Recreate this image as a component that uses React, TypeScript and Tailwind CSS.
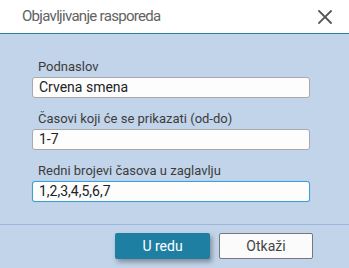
import React from "react";

export default function App() {
  const font = { fontFamily: "Roboto, 'Liberation Sans', Arial, sans-serif" };
  return (
    <div className="w-[349px] h-[268px] flex flex-col bg-[#c2d4ea] overflow-hidden" style={font}>
      <div className="h-[34px] shrink-0 bg-white border-b border-[#2d7fa6] flex items-center justify-between pl-[22px] pr-[17px]">
        <span className="text-[15px] tracking-[-0.7px] text-[#626262] leading-none">Objavljivanje rasporeda</span>
        <svg width="14" height="14" viewBox="0 0 14 14" className="block">
          <path d="M1 1L13 13M13 1L1 13" stroke="#555" strokeWidth="1.8" strokeLinecap="square" />
        </svg>
      </div>
      <div className="h-[190px] shrink-0 pt-[25px] pl-[32px] pr-[39px] flex flex-col gap-[13px]">
        <div className="flex flex-col gap-[2px]">
          <label className="text-[13px] leading-[16px] text-[#3c3c3c] pl-[6px]">Podnaslov</label>
          <div className="h-[21px] bg-[#fdfdfd] border border-[#a9a9a9] rounded-[3px] flex items-center pl-[6px] text-[14px] text-[#222]">
            Crvena smena
          </div>
        </div>
        <div className="flex flex-col gap-[2px]">
          <label className="text-[13px] leading-[16px] text-[#3c3c3c] pl-[6px]">Časovi koji će se prikazati (od-do)</label>
          <div className="h-[21px] bg-[#fdfdfd] border border-[#a9a9a9] rounded-[3px] flex items-center pl-[6px] text-[14px] text-[#222]">
            1-7
          </div>
        </div>
        <div className="flex flex-col gap-[2px]">
          <label className="text-[13px] leading-[16px] text-[#3c3c3c] pl-[6px]">Redni brojevi časova u zaglavlju</label>
          <div className="h-[21px] bg-[#fdfdfd] border border-[#3a9fd6] rounded-[3px] flex items-center pl-[6px] text-[14px] text-[#222] shadow-[0_0_1px_#5ab0e0]">
            1,2,3,4,5,6,7
          </div>
        </div>
      </div>
      <div className="flex-1 border-t border-[#9db7da] flex justify-end items-start pt-[8px] pr-[36px] gap-[9px]">
        <button className="w-[95px] h-[26px] bg-[#1f7fa3] text-white text-[14px] rounded-[2px] shadow-[2px_3px_5px_rgba(0,0,0,0.35)] flex items-center justify-center">
          U redu
        </button>
        <button className="w-[94px] h-[26px] bg-[#fbfbfb] text-[#444] text-[14px] rounded-[2px] border border-[#777] flex items-center justify-center">
          Otkaži
        </button>
      </div>
    </div>
  );
}
